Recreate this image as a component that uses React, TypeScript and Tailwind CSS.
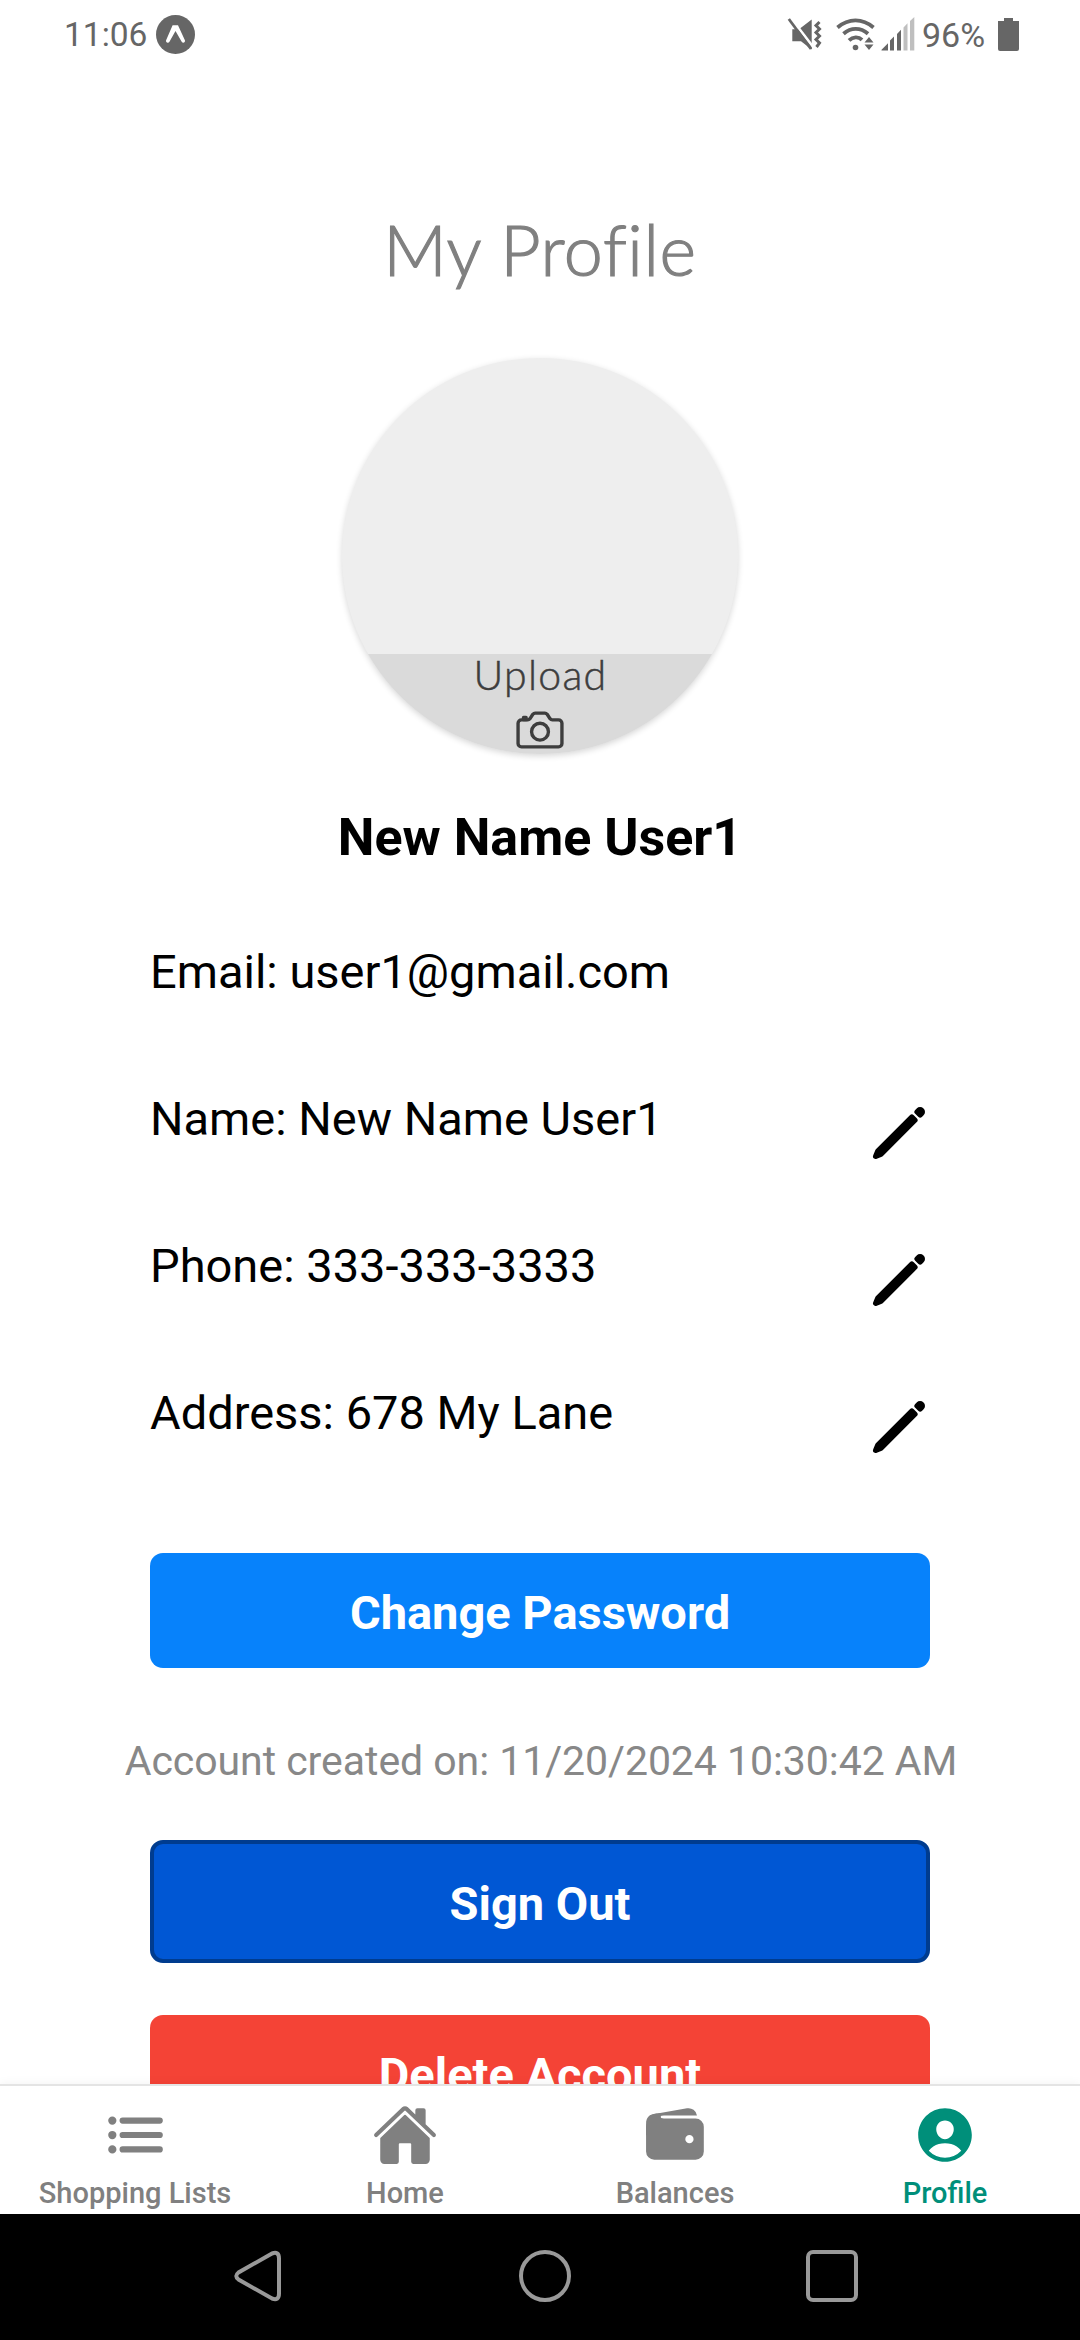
import type { ReactNode } from "react";
import { IoCameraOutline, IoHome, IoList, IoPencil, IoPersonCircle, IoWallet } from "react-icons/io5";

function StatusBar() {
  return (
    <header className="flex h-[69px] shrink-0 items-center justify-between pr-[61px] pl-[64px] leading-[70px] text-[#666666]">
      <div className="flex items-center">
        <span className="w-[92px] text-[33.5px] whitespace-nowrap">11:06</span>
        <svg className="size-[39px]" viewBox="0 0 39 39">
          <circle cx="19.5" cy="19.5" r="19.5" fill="#666666" />
          <path
            d="M10 25.500 16.600 10.300h5.400L29 25.500q.3 2-1.500 2.300-1.300 0-1.800-1L19.500 16l-6.200 11q-.6 1-1.800.8-1.800-.4-1.500-2.300z"
            fill="#fff"
          />
        </svg>
      </div>
      <div className="flex items-center">
        <svg className="h-[36px] w-[130px]" viewBox="0 0 130 36" fill="#666666">
          <path d="M5.300 12.200H12L24.700 2.500V32.500L14 24.200H5.300z" />
          <path d="M4.500 1.800 27 31" stroke="#fff" strokeWidth="2.600" />
          <path d="M1.800 2 24 32" stroke="#666666" strokeWidth="2.800" />
          <path d="m32.500 5-3.500 3.500 3.500 3.500-3.500 3.500 3.500 3.500-3.500 3.500 3.500 3.500-3 4" fill="none" stroke="#666666" strokeWidth="3" />
          <g fill="none" stroke="#666666" strokeWidth="3.800">
            <path d="M50.500 10.500c11-9.500 25-9.500 36 0" />
            <path d="M56.500 16.800c7.500-6.600 17-6.600 24.500 0" />
            <path d="M62 23.300c4-3.800 9.500-4 13-.5" />
          </g>
          <circle cx="68.500" cy="30.500" r="2.800" />
          <path d="m82 20 4.500 5.500h-9zM82 33l4.500-5.500h-9z" />
          <path d="M94.500 33.500v-.8l6.500-6.500v7.300zM103 33.500V23.500l4-4v14zM110 33.500V17l4-4.200v20.700z" />
          <path d="M116.500 33.500V10.500l4-4.200v27.200zM123 33.500V4l4.300-4v33.500z" fill="#bfbfbf" />
        </svg>
        <span className="ml-[5px] w-[76px] text-[34px] whitespace-nowrap">96%</span>
        <svg className="h-[33px] w-[21px]" viewBox="0 0 21 33" fill="#666666">
          <path d="M6 0h9v3h6v28q0 2-2 2H2q-2 0-2-2V3h6z" />
        </svg>
      </div>
    </header>
  );
}

function Avatar() {
  return (
    <div className="mx-auto flex size-[396px] shrink-0 flex-col justify-end overflow-hidden rounded-full bg-[#eeeeee] shadow-[0_2px_6px_rgba(0,0,0,0.16)]">
      <div className="flex h-[100px] shrink-0 flex-col items-center bg-[#dadada] font-['Lato',sans-serif] text-[#3d3d3d]">
        <span className="h-[49px] shrink-0 pl-[1px] text-[41px] leading-[42px] font-light tracking-[1.3px] [-webkit-text-stroke:0.5px_#3d3d3d]">Upload</span>
        <IoCameraOutline className="size-[54px] shrink-0" />
      </div>
    </div>
  );
}

function Field({ label, value, editable = true }: { label: string; value: string; editable?: boolean }) {
  return (
    <div className="flex h-[147px] items-start justify-between">
      <span className="text-[47px] leading-[56px]">
        {label}: {value}
      </span>
      {editable && <IoPencil className="mt-[10px] -mr-px size-[64px]" />}
    </div>
  );
}

function Tab({ label, icon, active = false }: { label: string; icon: ReactNode; active?: boolean }) {
  return (
    <div className={`flex flex-1 flex-col items-center pt-[16px] ${active ? "text-[#008f7a]" : "text-[#808080]"}`}>
      {icon}
      <span className="mt-[7px] text-[29px] leading-[36px] font-medium">{label}</span>
    </div>
  );
}

export default function App() {
  return (
    <div className="flex h-[2340px] w-[1080px] flex-col overflow-hidden bg-white font-['Roboto',sans-serif] text-black">
      <StatusBar />
      <main className="flex h-[2015px] shrink-0 flex-col overflow-hidden">
        <h1 className="mt-[138px] h-[151px] shrink-0 text-center font-['Lato',sans-serif] text-[70px] leading-[84px] font-light tracking-[0.6px] text-[#808080] [-webkit-text-stroke:1.2px_#808080] [font-variant-ligatures:none]">
          My Profile
        </h1>
        <Avatar />
        <h2 className="mt-[51px] shrink-0 text-center text-[52px] leading-[66px] font-bold">New Name User1</h2>
        <section className="mx-[150px] mt-[73px] flex shrink-0 flex-col">
          <Field label="Email" value="user1@gmail.com" editable={false} />
          <Field label="Name" value="New Name User1" />
          <Field label="Phone" value="333-333-3333" />
          <Field label="Address" value="678 My Lane" />
        </section>
        <button className="mx-[150px] mt-[21px] h-[115px] shrink-0 rounded-[13px] bg-[#0782fb] pt-[5px] text-[47px] leading-[56px] font-bold text-white">Change Password</button>
        <p className="mt-[68px] shrink-0 pl-[2px] text-center text-[41px] leading-[50px] tracking-[-0.05px] text-[#888888]">Account created on: 11/20/2024 10:30:42 AM</p>
        <button className="mx-[150px] mt-[54px] h-[123px] shrink-0 rounded-[13px] border-[4px] border-[#003c8f] bg-[#0057d4] pt-[5px] text-[47px] leading-[56px] font-bold text-white">Sign Out</button>
        <button className="mx-[150px] mt-[52px] h-[115px] shrink-0 rounded-[13px] bg-[#f44336] pt-[5px] text-[47px] leading-[56px] font-bold text-white">Delete Account</button>
      </main>
      <nav className="z-10 flex h-[130px] shrink-0 border-t-2 border-[#e4e4e4] bg-white shadow-[0_0_10px_rgba(0,0,0,0.06)]">
        <Tab label="Shopping Lists" icon={<IoList className="size-[66px]" />} />
        <Tab label="Home" icon={<IoHome className="size-[66px]" />} />
        <Tab label="Balances" icon={<IoWallet className="size-[66px]" />} />
        <Tab label="Profile" icon={<IoPersonCircle className="size-[66px]" />} active />
      </nav>
      <footer className="z-20 flex h-[126px] shrink-0 items-center bg-black pr-[222px] pb-[2px] pl-[234px]">
        <svg className="h-[52px] w-full" viewBox="0 0 624 52" fill="none" stroke="#999999" strokeWidth="4">
          <path d="M38 3.500 4.500 22.500q-4.500 3.500 0 7L38 48.500q7 2.500 7-5V8.500q0-7.500-7-5z" />
          <circle cx="311" cy="26" r="24" />
          <rect x="574" y="2" width="48" height="48" rx="5" />
        </svg>
      </footer>
    </div>
  );
}
